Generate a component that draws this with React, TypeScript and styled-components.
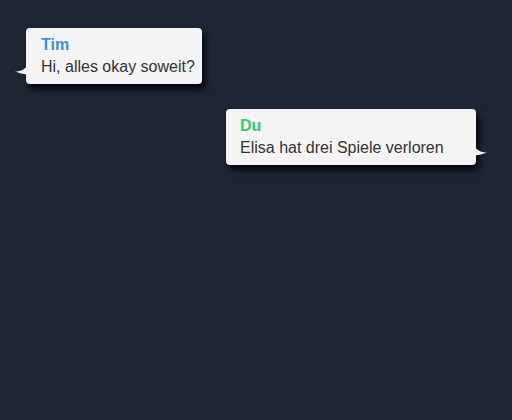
import React from "react";
import styled, { createGlobalStyle } from "styled-components";

const Global = createGlobalStyle`
  html, body { margin: 0; padding: 0; }
  body {
    background: #1c2733;
    font-family: "Liberation Sans", Arial, sans-serif;
  }
`;

const Page = styled.div`
  height: 420px;
  box-sizing: border-box;
  background: #1c2733;
  padding: 28px 36px 0 26px;
  display: flex;
  flex-direction: column;
  gap: 25px;
`;

const Row = styled.div<{ $mine?: boolean }>`
  display: flex;
  justify-content: ${(p) => (p.$mine ? "flex-end" : "flex-start")};
`;

const Bubble = styled.div<{ $width: number; $padLeft: number }>`
  position: relative;
  width: ${(p) => p.$width}px;
  box-sizing: border-box;
  padding: 6px 4px 6px ${(p) => p.$padLeft}px;
  background: #f4f4f4;
  border-radius: 4px;
  box-shadow: 3px 5px 6px rgba(0, 0, 0, 0.85);
  white-space: nowrap;
`;

const Name = styled.div<{ $color: string }>`
  font-size: 16px;
  line-height: 22px;
  font-weight: bold;
  color: ${(p) => p.$color};
`;

const Text = styled.div`
  font-size: 16px;
  line-height: 22px;
  color: #333333;
`;

const Tail = styled.svg<{ $mine?: boolean }>`
  position: absolute;
  bottom: 9px;
  width: 12px;
  height: 10px;
  ${(p) => (p.$mine ? "right: -11px; transform: scaleX(-1);" : "left: -11px;")}
`;

function BubbleTail({ mine }: { mine?: boolean }) {
  return (
    <Tail $mine={mine} viewBox="0 0 12 10">
      <path d="M12 0 C11 4 6 6.5 0 6.5 C4 8 8 9 12 9.5 Z" fill="#f4f4f4" />
    </Tail>
  );
}

export default function App() {
  return (
    <>
      <Global />
      <Page>
        <Row>
          <Bubble $width={176} $padLeft={15}>
            <BubbleTail />
            <Name $color="#3a8fdc">Tim</Name>
            <Text>Hi, alles okay soweit?</Text>
          </Bubble>
        </Row>
        <Row $mine>
          <Bubble $width={250} $padLeft={14}>
            <BubbleTail mine />
            <Name $color="#2fcb6e">Du</Name>
            <Text>Elisa hat drei Spiele verloren</Text>
          </Bubble>
        </Row>
      </Page>
    </>
  );
}
